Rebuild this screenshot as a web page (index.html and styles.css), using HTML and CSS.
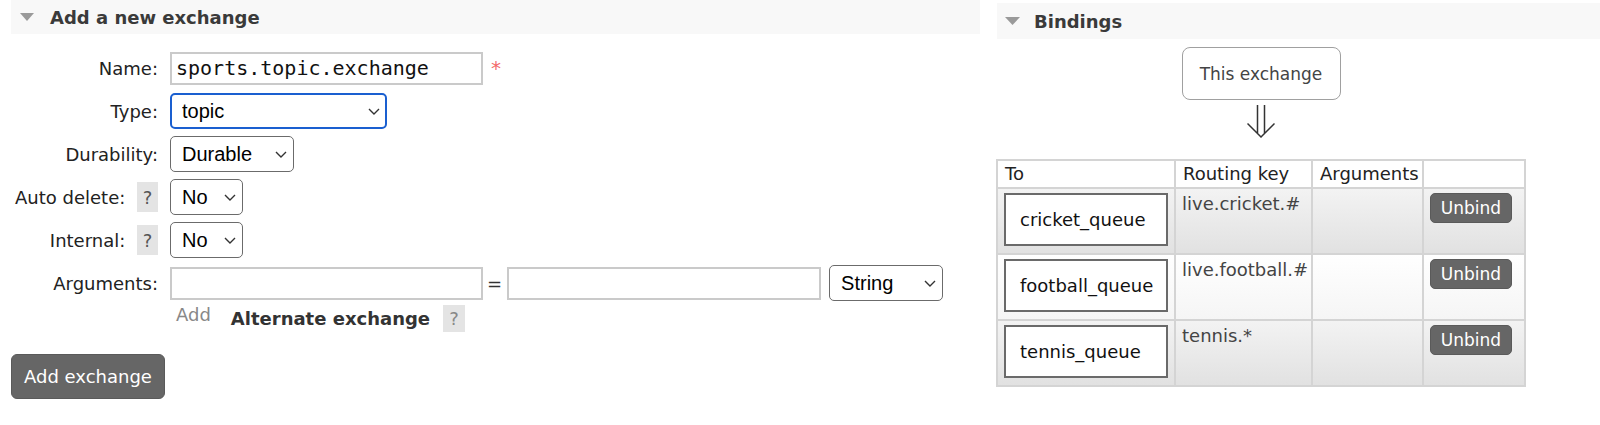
FILE: index.html
```html
<!DOCTYPE html>
<html lang="en">

<head>
    <meta charset="UTF-8">
    <meta name="viewport" content="width=device-width, initial-scale=1.0">
    <title>Exchange</title>
    <link rel="stylesheet" href="styles.css">
</head>

<body>
    <div class="page">
        <!-- add exchange -->
        <div class="panel-left">
            <div class="section-head head-left">
                <svg class="tri" width="14" height="8" viewBox="0 0 14 8"><path d="M0 0H14L7 8Z" /></svg>
                <span>Add a new exchange</span>
            </div>

            <div class="form">
                <div class="row">
                    <div class="label">Name:</div>
                    <input type="text" class="text-in mono" value="sports.topic.exchange">
                    <span class="req">*</span>
                </div>
                <div class="row">
                    <div class="label">Type:</div>
                    <span class="select-wrap w-type">
                        <select class="select is-focus"><option>topic</option></select>
                        <svg class="chev" viewBox="0 0 12 7"><path d="M1 1l5 5 5-5" /></svg>
                    </span>
                </div>
                <div class="row">
                    <div class="label">Durability:</div>
                    <span class="select-wrap w-dur">
                        <select class="select"><option>Durable</option></select>
                        <svg class="chev" viewBox="0 0 12 7"><path d="M1 1l5 5 5-5" /></svg>
                    </span>
                </div>
                <div class="row">
                    <div class="label">Auto delete: <span class="help">?</span></div>
                    <span class="select-wrap w-no">
                        <select class="select"><option>No</option></select>
                        <svg class="chev" viewBox="0 0 12 7"><path d="M1 1l5 5 5-5" /></svg>
                    </span>
                </div>
                <div class="row">
                    <div class="label">Internal: <span class="help">?</span></div>
                    <span class="select-wrap w-no">
                        <select class="select"><option>No</option></select>
                        <svg class="chev" viewBox="0 0 12 7"><path d="M1 1l5 5 5-5" /></svg>
                    </span>
                </div>
                <div class="row">
                    <div class="label">Arguments:</div>
                    <input type="text" class="text-in">
                    <span class="eq">=</span>
                    <input type="text" class="text-in arg-val">
                    <span class="select-wrap w-str">
                        <select class="select"><option>String</option></select>
                        <svg class="chev" viewBox="0 0 12 7"><path d="M1 1l5 5 5-5" /></svg>
                    </span>
                </div>
            </div>

            <div class="sub-row">
                <span class="add-link">Add</span>
                <span class="alt">Alternate exchange</span>
                <span class="help help-alt">?</span>
            </div>

            <button class="btn-add">Add exchange</button>
        </div>

        <!-- bindings -->
        <div class="panel-right">
            <div class="section-head head-right">
                <svg class="tri" width="15" height="8" viewBox="0 0 15 8"><path d="M0 0H15L7.5 8Z" /></svg>
                <span>Bindings</span>
            </div>

            <div class="bindings">
                <div class="this-ex">This exchange</div>
                <svg class="arrow" width="28" height="34" viewBox="0 0 28 34">
                    <path d="M10.5 0V28.5M17.5 0V28.5M0.5 18.5L14 32L27.5 18.5" />
                </svg>

                <table class="bind-table">
                    <colgroup>
                        <col style="width:178px">
                        <col style="width:137px">
                        <col style="width:111px">
                        <col style="width:102px">
                    </colgroup>
                    <tr class="head">
                        <th>To</th>
                        <th>Routing key</th>
                        <th>Arguments</th>
                        <th></th>
                    </tr>
                    <tr class="alt1">
                        <td><div class="queue">cricket_queue</div></td>
                        <td class="rk">live.cricket.#</td>
                        <td></td>
                        <td><button class="btn-unbind">Unbind</button></td>
                    </tr>
                    <tr class="alt2">
                        <td><div class="queue">football_queue</div></td>
                        <td class="rk">live.football.#</td>
                        <td></td>
                        <td><button class="btn-unbind">Unbind</button></td>
                    </tr>
                    <tr class="alt1">
                        <td><div class="queue">tennis_queue</div></td>
                        <td class="rk">tennis.*</td>
                        <td></td>
                        <td><button class="btn-unbind">Unbind</button></td>
                    </tr>
                </table>
            </div>
        </div>
    </div>
</body>

</html>
```

FILE: styles.css
```css
body {
    margin: 0;
    padding: 0;
    background: #fff;
    font-family: "DejaVu Sans", Verdana, sans-serif;
    font-size: 18px;
    color: #222;
}

.page {
    display: flex;
    align-items: flex-start;
}

.panel-left {
    width: 969px;
    margin-left: 11px;
}

.panel-right {
    width: 603px;
    margin-left: 17px;
    margin-top: 3px;
}

.section-head {
    display: flex;
    align-items: center;
    background-color: #f8f8f8;
    font-weight: bold;
    color: #3a3a3a;
}

.head-left {
    height: 34px;
    padding-left: 9px;
    gap: 16px;
}

.head-right {
    height: 36px;
    padding-left: 8px;
    gap: 14px;
}

.tri {
    fill: #9a9a9a;
}

/* form */
.form {
    margin-top: 16px;
    display: flex;
    flex-direction: column;
    gap: 7px;
}

.row {
    display: flex;
    align-items: center;
    height: 36px;
}

.label {
    width: 147px;
    margin-right: 12px;
    display: flex;
    justify-content: flex-end;
    align-items: center;
    gap: 6px;
    white-space: pre;
}

.help {
    display: inline-flex;
    justify-content: center;
    align-items: center;
    width: 21px;
    height: 30px;
    background-color: #e4e4e4;
    color: #555;
    font-size: 18px;
}

.text-in {
    box-sizing: border-box;
    width: 313px;
    height: 33px;
    border: 2px solid #cacaca;
    padding: 0 4px;
    margin: 0;
    font-family: "DejaVu Sans", Verdana, sans-serif;
    font-size: 18px;
    outline: none;
}

.mono {
    font-family: "DejaVu Sans Mono", monospace;
    font-size: 20px;
    color: #111;
}

.req {
    align-self: flex-start;
    margin-top: 6px;
    margin-left: 8px;
    color: #f36a6a;
    font-size: 20px;
}

.eq {
    margin: 0 5px 0 4px;
    color: #333;
}

.arg-val {
    width: 314px;
    margin-right: 8px;
}

.select-wrap {
    position: relative;
    display: inline-flex;
}

.w-type { width: 217px; }
.w-dur { width: 124px; }
.w-no { width: 73px; }
.w-str { width: 114px; }

.select {
    appearance: none;
    -webkit-appearance: none;
    box-sizing: border-box;
    width: 100%;
    height: 36px;
    margin: 0;
    padding: 0 0 0 11px;
    border: 1px solid #6b6b6b;
    border-radius: 5px;
    background: #fff;
    color: #000;
    font-family: "Liberation Sans", Arial, sans-serif;
    font-size: 20px;
    outline: none;
}

.select.is-focus {
    border: 2px solid #1a5fd0;
    padding-left: 10px;
}

.chev {
    position: absolute;
    right: 7px;
    top: 50%;
    margin-top: -3px;
    width: 12px;
    height: 7px;
    fill: none;
    stroke: #333;
    stroke-width: 1.4;
    pointer-events: none;
}

.sub-row {
    display: flex;
    align-items: center;
    height: 27px;
    margin-top: 4px;
    padding-left: 165px;
}

.add-link {
    color: #888;
    margin-bottom: 8px;
    margin-right: 20px;
}

.alt {
    font-weight: bold;
    color: #333;
    margin-right: 13px;
}

.help-alt {
    height: 27px;
    width: 22px;
    color: #888;
}

.btn-add {
    margin-top: 22px;
    height: 45px;
    padding: 0 12px;
    border: 1px solid #5a5a5a;
    border-radius: 6px;
    background-color: #666;
    color: #fff;
    font-family: "DejaVu Sans", Verdana, sans-serif;
    font-size: 18px;
}

/* bindings */
.bindings {
    width: 528px;
    display: flex;
    flex-direction: column;
    align-items: center;
}

.this-ex {
    box-sizing: border-box;
    margin-top: 8px;
    width: 159px;
    height: 53px;
    border: 1px solid #a0a0a0;
    border-radius: 8px;
    display: flex;
    justify-content: center;
    align-items: center;
    font-size: 17px;
    color: #444;
}

.arrow {
    margin-top: 5px;
    fill: none;
    stroke: #333;
    stroke-width: 1.5;
}

.bind-table {
    margin-top: 20px;
    width: 528px;
    table-layout: fixed;
    border-collapse: collapse;
    border: 2px solid #d4d4d4;
}

.bind-table th,
.bind-table td {
    border: 2px solid #d4d4d4;
    text-align: left;
    vertical-align: top;
}

.bind-table th {
    font-weight: normal;
    color: #222;
    padding: 2px 7px;
    line-height: 22px;
    background-color: #fff;
}

.bind-table td {
    padding: 4px 6px 7px;
    line-height: 22px;
}

.alt1 {
    background: linear-gradient(#f3f3f3, #e1e1e1);
}

.alt2 {
    background: linear-gradient(#fff, #f5f5f5);
}

.rk {
    color: #444;
}

.queue {
    box-sizing: border-box;
    height: 53px;
    width: 164px;
    border: 2px solid #6a6a6a;
    background: #fff;
    padding-left: 14px;
    line-height: 49px;
    color: #111;
}

.btn-unbind {
    height: 30px;
    width: 82px;
    padding: 0;
    border: 1px solid #5a5a5a;
    border-radius: 5px;
    background-color: #666;
    color: #fff;
    font-family: "DejaVu Sans", Verdana, sans-serif;
    font-size: 17px;
}
```
